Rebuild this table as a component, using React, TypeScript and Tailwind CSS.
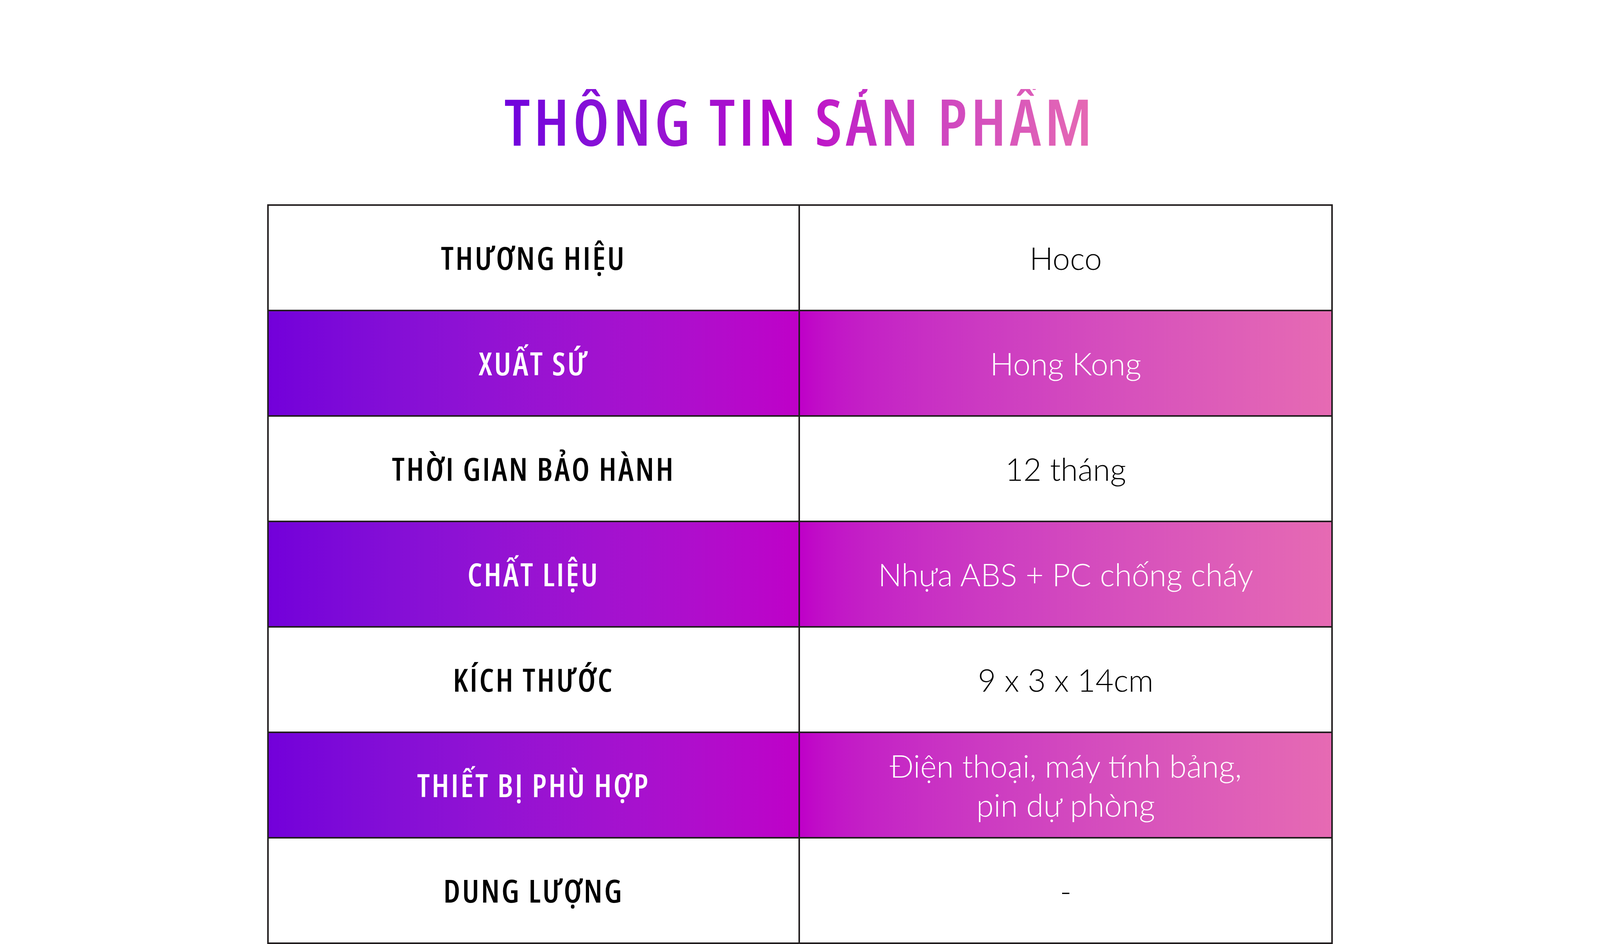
import React from "react";

const rows: { label: string; value: string[]; grad: boolean }[] = [
  { label: "THƯƠNG HIỆU", value: ["Hoco"], grad: false },
  { label: "XUẤT SỨ", value: ["Hong Kong"], grad: true },
  { label: "THỜI GIAN BẢO HÀNH", value: ["12 tháng"], grad: false },
  { label: "CHẤT LIỆU", value: ["Nhựa ABS + PC chống cháy"], grad: true },
  { label: "KÍCH THƯỚC", value: ["9 x 3 x 14cm"], grad: false },
  { label: "THIẾT BỊ PHÙ HỢP", value: ["Điện thoại, máy tính bảng,", "pin dự phòng"], grad: true },
  { label: "DUNG LƯỢNG", value: ["-"], grad: false },
];

export default function App() {
  return (
    <div className="w-full h-[2417px] overflow-hidden bg-white flex flex-col items-center">
      <h1 className="mt-[228px] text-[164px] leading-none font-semibold font-stretch-[81%] tracking-[0.057em] font-['Open_Sans',sans-serif] bg-linear-to-r from-[#7000dd] via-[#bb00c9] to-[#e66ab3] bg-clip-text text-transparent whitespace-nowrap">
        THÔNG TIN SẢN PHẨM
      </h1>
      <div className="mt-[131px] w-[66.62%] border-4 border-[#231f20] flex flex-col">
        {rows.map((r, i) => (
          <div
            key={i}
            className={
              "grid grid-cols-2 box-border " +
              (i === 0 ? "h-[266px] " : "h-[270px] border-t-4 border-[#231f20] ") +
              (r.grad ? "bg-linear-to-r from-[#7300da] via-[#bf00c8] to-[#e66ab3]" : "bg-white")
            }
          >
            <div
              className={
                "border-r-4 border-[#231f20] flex items-center justify-center text-[81px] font-semibold font-stretch-[81%] tracking-[0.056em] font-['Open_Sans',sans-serif] whitespace-nowrap " +
                (r.grad ? "text-white" : "text-black")
              }
            >
              {r.label}
            </div>
            <div
              className={
                "flex flex-col items-center justify-center text-[80px] font-light leading-[100px] font-['Lato',sans-serif] whitespace-nowrap " +
                (r.grad ? "text-white" : "text-black")
              }
            >
              {r.value.map((v, j) => (
                <span key={j}>{v}</span>
              ))}
            </div>
          </div>
        ))}
      </div>
    </div>
  );
}
